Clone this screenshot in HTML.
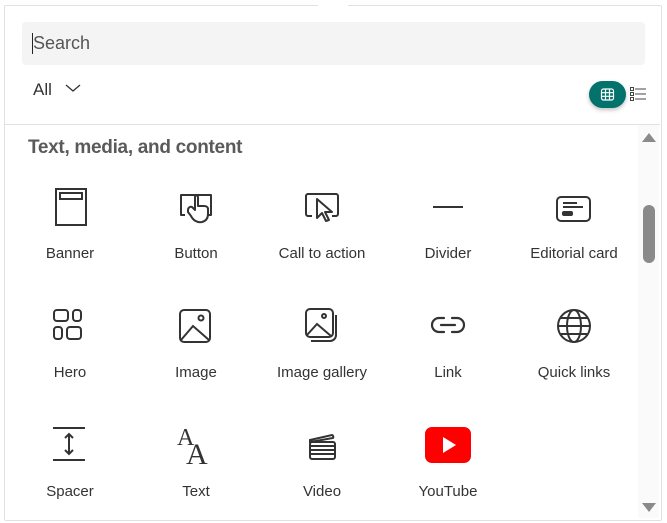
<!DOCTYPE html>
<html><head><meta charset="utf-8"><style>
body{margin:0;width:667px;height:523px;background:#fff;font-family:"Liberation Sans",sans-serif;position:relative;overflow:hidden}
.panel{position:absolute;left:4px;top:5px;width:656px;height:514px;border:1px solid #e1e1e1;border-radius:2px;background:#fff}
.notch{position:absolute;left:318px;top:0;width:30px;height:6px;background:#fff}
.search{position:absolute;left:22px;top:22px;width:623px;height:43px;background:#f4f4f4;border-radius:4px}
.search span{position:absolute;left:11px;top:11px;font-size:18px;color:#555}
.caret{position:absolute;left:10px;top:11px;width:1px;height:21px;background:#222}
.all{position:absolute;left:33px;top:80px;font-size:17px;color:#333}
.sep{position:absolute;left:5px;top:124px;width:655px;height:1px;background:#e1e1e1}
.h{position:absolute;left:28px;top:137px;font-size:19px;font-weight:bold;color:#5a5a5a;letter-spacing:-0.3px}
.track{position:absolute;left:638px;top:125px;width:21px;height:393px;background:#fafafa}
.thumb{position:absolute;left:643px;top:205px;width:12px;height:58px;background:#8a8a8a;border-radius:6px}
.it{position:absolute;width:126px;text-align:center}
.it svg{display:block;margin:0 auto}
.it div{font-size:15px;color:#333;margin-top:18px}
</style></head><body>
<div class="panel"></div><div class="notch"></div>
<div class="search"><div class="caret"></div><span>Search</span></div>
<div class="all">All <svg width="16" height="10" style="margin-left:8px;vertical-align:2px"><path d="M1 2l7 6 7-6" fill="none" stroke="#333" stroke-width="1.3"/></svg></div>
<div style="position:absolute;left:589px;top:81px;width:37px;height:27px;border-radius:14px;background:#03716c;box-shadow:0 2px 4px rgba(0,0,0,.25)">
<svg width="37" height="27"><g fill="none" stroke="#fff" stroke-width="1.2"><rect x="12.5" y="8" width="12" height="11" rx="2"/><path d="M16.5 8v11M20.5 8v11M12.5 11.7h12M12.5 15.3h12"/></g></svg></div>
<svg style="position:absolute;left:629px;top:86px" width="18" height="17"><g fill="none" stroke="#444" stroke-width="1"><rect x="1.5" y="1.5" width="3" height="3"/><rect x="1.5" y="6.5" width="3" height="3"/><rect x="1.5" y="11.5" width="3" height="3"/><path d="M6 3h11M6 8h11M6 13h11"/></g></svg>
<div class="sep"></div>
<div class="h">Text, media, and content</div>
<div class="track"></div><div class="thumb"></div>
<svg style="position:absolute;left:641px;top:131px" width="16" height="12"><path d="M1 11L8 2l7 9z" fill="#8a8a8a"/></svg>
<svg style="position:absolute;left:641px;top:502px" width="16" height="12"><path d="M1 1h14L8 10z" fill="#8a8a8a"/></svg>

<div class="it" style="left:7px;top:187px"><svg width="40" height="40"><g fill="none" stroke="#333" stroke-width="2"><rect x="6" y="2" width="30" height="36"/><rect x="10" y="6" width="22" height="6"/></g></svg><div>Banner</div></div>
<div class="it" style="left:133px;top:187px"><svg width="40" height="40"><g fill="none" stroke="#333" stroke-width="2" stroke-linejoin="round"><path d="M9 28H5V8h30v20h-3"/><path d="M12 25l3 4c2 4 6 7 11 6 4-1 6-4 6-8v-5c0-2-2-3-4-3h-6V10c0-2-3-2-3 0v13l-3-3c-2-1-4 1-4 3z"/></g></svg><div>Button</div></div>
<div class="it" style="left:259px;top:187px"><svg width="40" height="40"><g fill="none" stroke="#333" stroke-width="2" stroke-linejoin="round"><path d="M10 29H6a2 2 0 0 1-2-2V9a2 2 0 0 1 2-2h28a2 2 0 0 1 2 2v18a2 2 0 0 1-2 2h-4"/><path d="M15 12v19l5-5 4 8 3-1-4-8h7z"/></g></svg><div>Call to action</div></div>
<div class="it" style="left:385px;top:187px"><svg width="40" height="40"><path d="M5 20h30" stroke="#333" stroke-width="2"/></svg><div>Divider</div></div>
<div class="it" style="left:511px;top:187px"><svg width="40" height="40"><g fill="none" stroke="#333" stroke-width="2"><rect x="3" y="10" width="33" height="24" rx="4"/><path d="M9 16h14M9 20h20"/></g><rect x="8" y="24" width="11" height="5" rx="2" fill="#333"/></svg><div>Editorial card</div></div>

<div class="it" style="left:7px;top:306px"><svg width="40" height="40"><g fill="none" stroke="#333" stroke-width="2"><rect x="4" y="4" width="14" height="11" rx="3"/><rect x="23" y="4" width="8" height="11" rx="3"/><rect x="4" y="21" width="8" height="12" rx="3"/><rect x="17" y="21" width="14" height="12" rx="3"/></g></svg><div>Hero</div></div>
<div class="it" style="left:133px;top:306px"><svg width="40" height="40"><g fill="none" stroke="#333" stroke-width="2"><rect x="4" y="4" width="30" height="32" rx="4"/><path d="M5 34l12-14 16 14"/><circle cx="25" cy="12" r="2.5"/></g></svg><div>Image</div></div>
<div class="it" style="left:259px;top:306px"><svg width="40" height="40"><g fill="none" stroke="#333" stroke-width="2"><rect x="4" y="3" width="27" height="28" rx="4"/><path d="M5 29l10-11 14 12"/><circle cx="22" cy="10" r="2"/><path d="M34 9v20a6 6 0 0 1-6 6H9"/></g></svg><div>Image gallery</div></div>
<div class="it" style="left:385px;top:306px"><svg width="40" height="40"><g fill="none" stroke="#333" stroke-width="2.2" stroke-linecap="round"><path d="M16 12h-5a7 7 0 0 0 0 14h5M24 12h5a7 7 0 0 1 0 14h-5M13 19h14"/></g></svg><div>Link</div></div>
<div class="it" style="left:511px;top:306px"><svg width="40" height="40"><g fill="none" stroke="#333" stroke-width="2"><circle cx="20" cy="20" r="16"/><ellipse cx="20" cy="20" rx="7" ry="16"/><path d="M4 20h32M7 12h26M7 28h26"/></g></svg><div>Quick links</div></div>

<div class="it" style="left:7px;top:425px"><svg width="40" height="40"><g fill="none" stroke="#333" stroke-width="2"><path d="M3 3h32M3 35h32M19 9v20M15 13l4-4 4 4M15 25l4 4 4-4"/></g></svg><div>Spacer</div></div>
<div class="it" style="left:133px;top:425px"><svg width="40" height="40"><text x="1" y="20" font-family="Liberation Serif,serif" font-size="24" fill="#333">A</text><text x="10" y="39" font-family="Liberation Serif,serif" font-size="30" fill="#333">A</text></svg><div>Text</div></div>
<div class="it" style="left:259px;top:425px"><svg width="40" height="40"><g fill="none" stroke="#333" stroke-width="2"><rect x="8" y="17" width="25" height="17" rx="2"/><path d="M8 21h25M8 25h25M8 29h25"/><path d="M8 15l22-5a2 2 0 0 1 1 3l-23 4z"/></g></svg><div>Video</div></div>
<div class="it" style="left:385px;top:425px"><svg width="52" height="40"><rect x="3" y="2" width="46" height="36" rx="7" fill="#f00"/><path d="M21 12v16l13-8z" fill="#fff"/></svg><div>YouTube</div></div>
</body></html>
